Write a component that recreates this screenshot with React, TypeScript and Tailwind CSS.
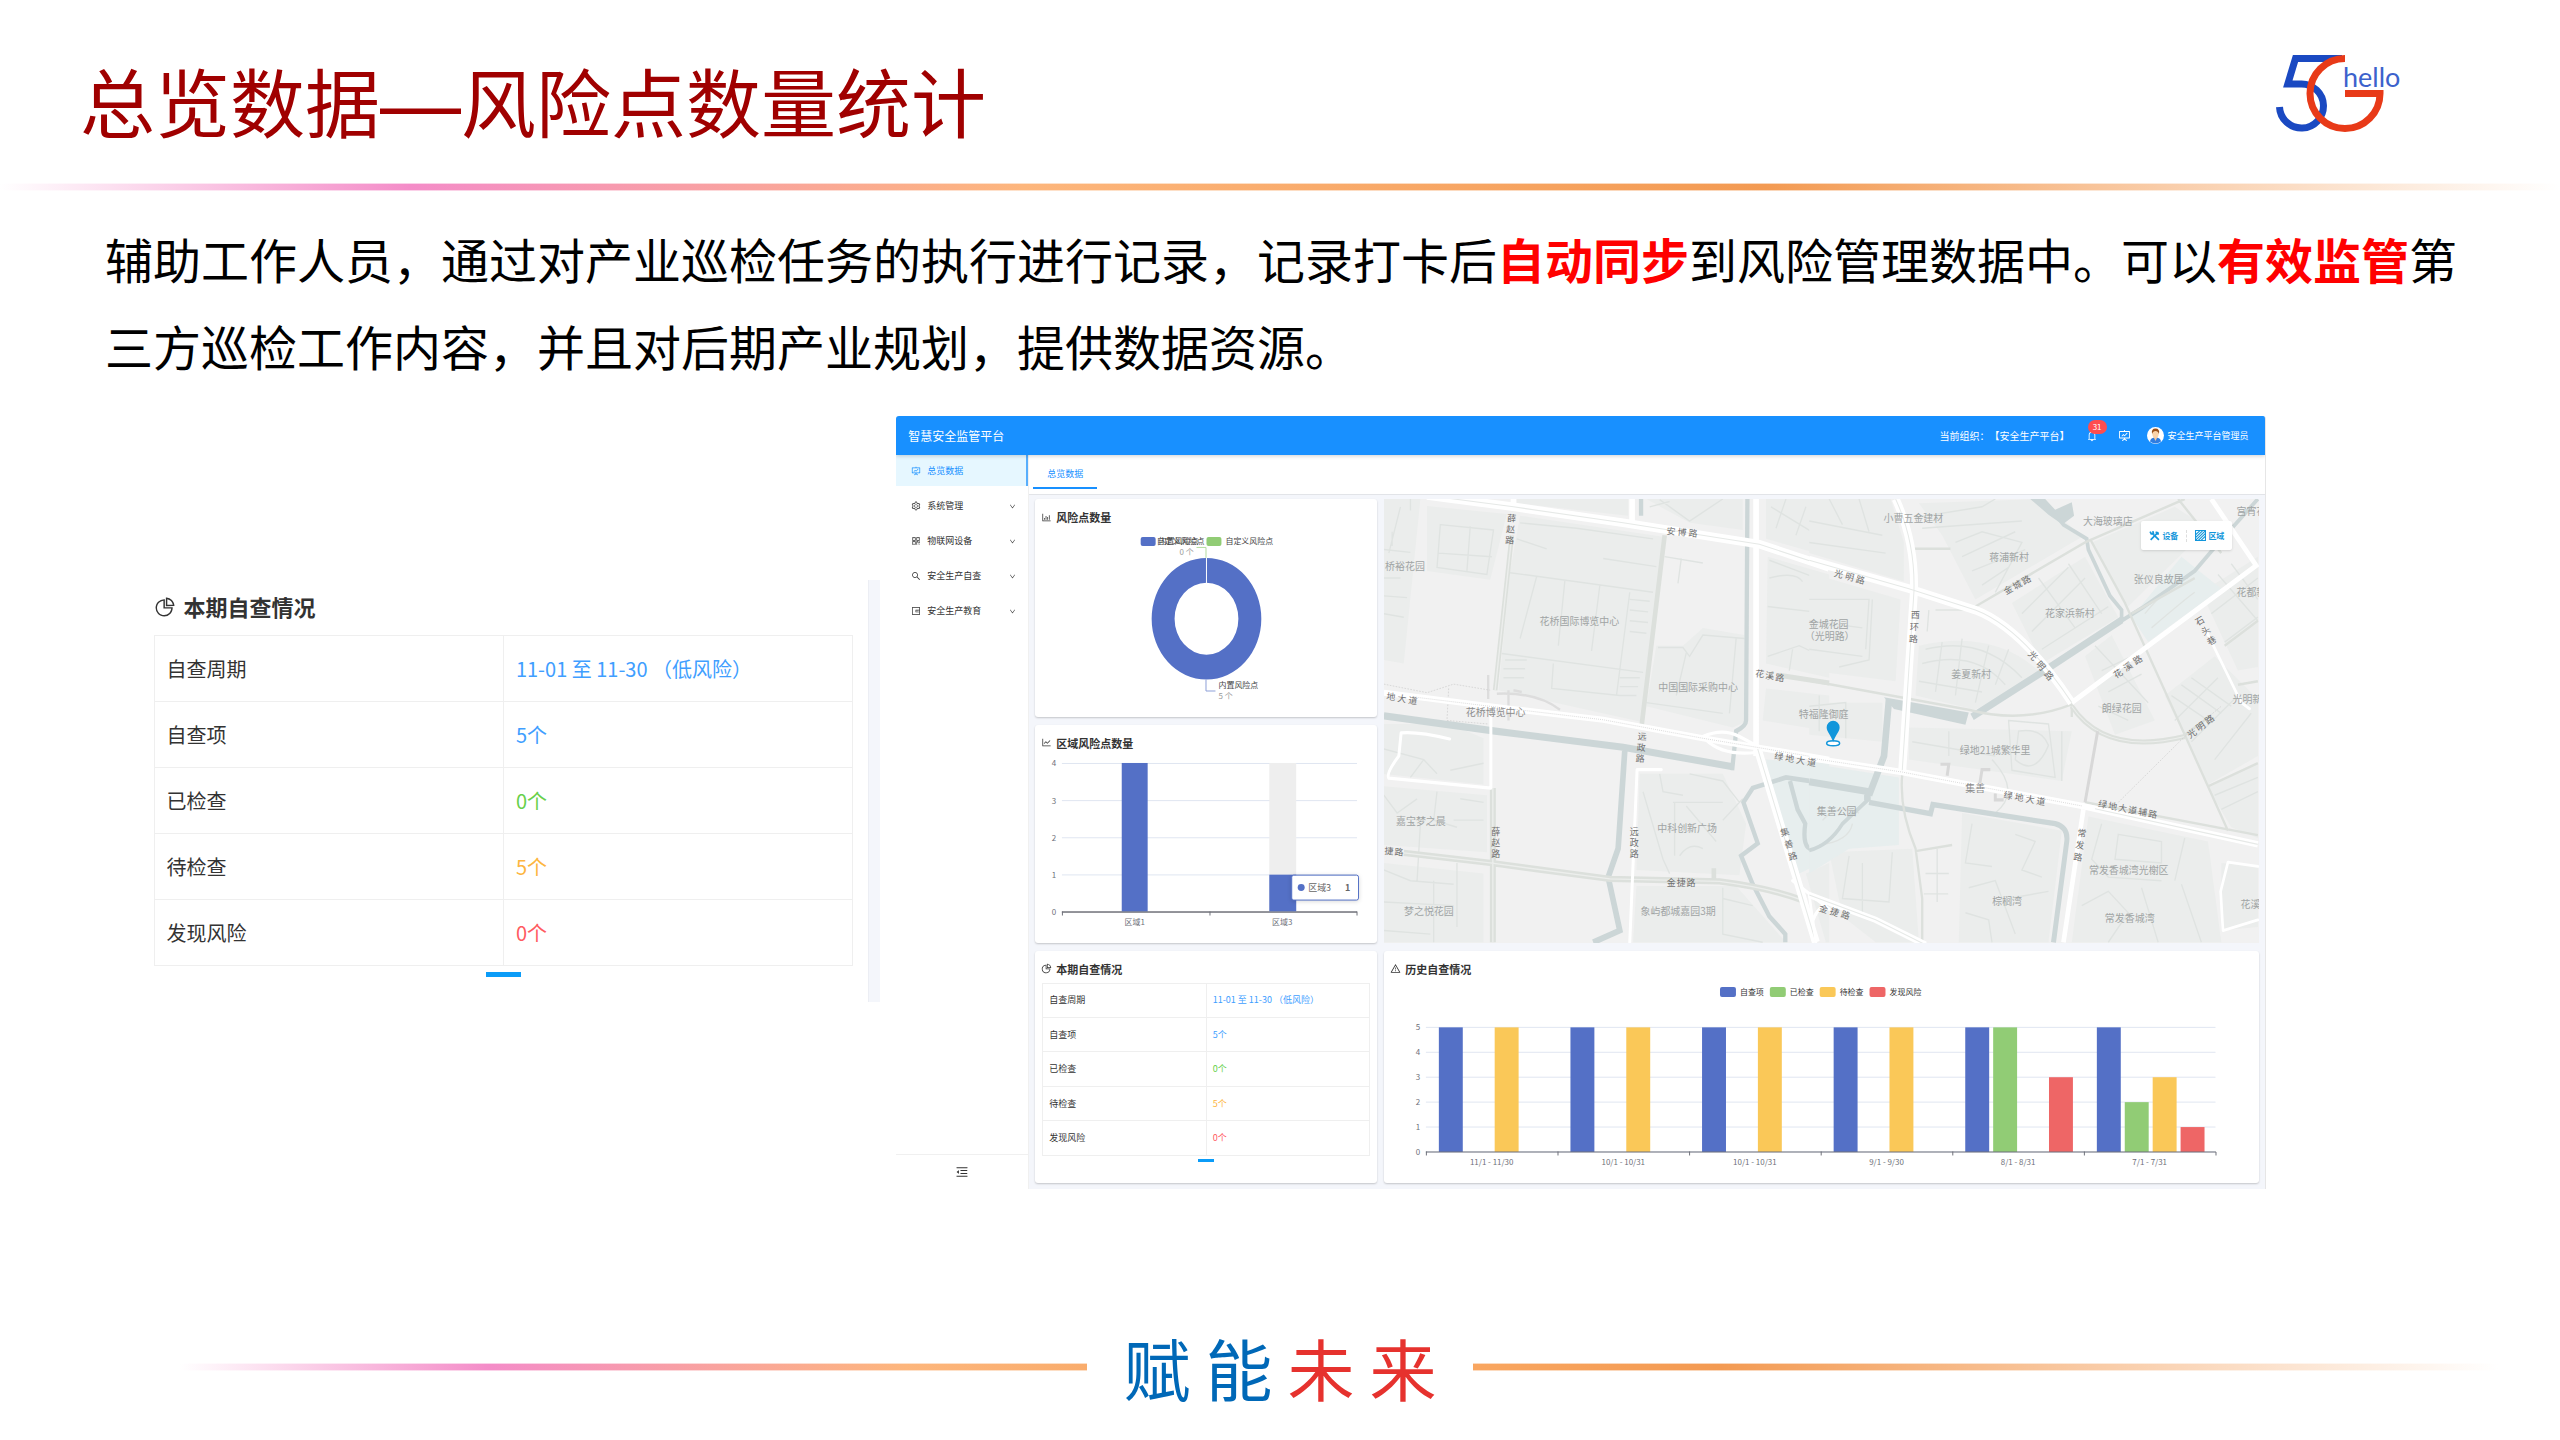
import React from 'react'
import {
  AiOutlineBarChart,
  AiOutlineBell,
  AiOutlineDown,
  AiOutlineFundProjectionScreen,
  AiOutlineLineChart,
  AiOutlineMenuFold,
  AiOutlinePieChart,
  AiOutlineQrcode,
  AiOutlineSearch,
  AiOutlineSetting,
  AiOutlineWallet,
  AiOutlineWarning,
} from 'react-icons/ai'

const checkRows = [
  { label: '自查周期', value: '11-01 至 11-30 （低风险）', color: 'text-[#409eff]' },
  { label: '自查项', value: '5个', color: 'text-[#409eff]' },
  { label: '已检查', value: '0个', color: 'text-[#67d04a]' },
  { label: '待检查', value: '5个', color: 'text-[#fdb540]' },
  { label: '发现风险', value: '0个', color: 'text-[#ff5a5f]' },
]

const menu = [
  { label: '系统管理', Icon: AiOutlineSetting },
  { label: '物联网设备', Icon: AiOutlineQrcode },
  { label: '安全生产自查', Icon: AiOutlineSearch },
  { label: '安全生产教育', Icon: AiOutlineWallet },
]

const series = [
  { name: '自查项', color: '#5470c6', x: 337 },
  { name: '已检查', color: '#91cc75', x: 387 },
  { name: '待检查', color: '#fac858', x: 437 },
  { name: '发现风险', color: '#ee6666', x: 487 },
]

const history = [
  { label: '11/1 - 11/30', values: [5, 0, 5, 0] },
  { label: '10/1 - 10/31', values: [5, 0, 5, 0] },
  { label: '10/1 - 10/31', values: [5, 0, 5, 0] },
  { label: '9/1 - 9/30', values: [5, 0, 5, 0] },
  { label: '8/1 - 8/31', values: [5, 5, 0, 3] },
  { label: '7/1 - 7/31', values: [5, 2, 3, 1] },
]

// [text, x, y] centre of the label
const places: [string, number, number][] = [
  ['桥裕花园', 21, 67],
  ['花桥国际博览中心', 196, 122],
  ['中国国际采购中心', 315, 188],
  ['嘉宝梦之晨', 37, 322],
  ['梦之悦花园', 45, 413],
  ['中科创新广场', 304, 329],
  ['象屿都城嘉园3期', 295, 413],
  ['金城花园', 446, 125],
  ['（光明路）', 447, 137],
  ['特福隆御庭', 441, 215],
  ['小曹五金建材', 531, 19],
  ['蒋浦新村', 627, 58],
  ['大海玻璃店', 726, 22],
  ['张仪良故居', 777, 80],
  ['花家浜新村', 688, 114],
  ['姜夏新村', 589, 175],
  ['朗绿花园', 740, 209],
  ['绿地21城繁华里', 613, 251],
  ['集善公园', 454, 312],
  ['常发香城湾光榭区', 747, 372],
  ['常发香城湾', 748, 420],
  ['棕榈湾', 625, 403],
  ['花溪公馆', 879, 406],
  ['宫宵花园', 875, 12],
  ['花都新村', 875, 93],
  ['光明新村', 871, 200],
]

// [text, x, y, step x, step y, rotation], one glyph per step along the road
const roads: [string, number, number, number, number, number][] = [
  ['薛赵路', 128, 19, -1, 11, 3],
  ['安博路', 288, 32, 11, 1, 6],
  ['地大道', 7, 198, 11, 2, 8],
  ['远政路', 259, 238, -1, 11, 3],
  ['花溪路', 377, 175, 10, 2, 6],
  ['绿地大道', 396, 258, 11, 2, 8],
  ['薛赵路', 112, 334, 0, 11, 0],
  ['远政路', 251, 334, 0, 11, 0],
  ['捷路', 5, 353, 10, 1, 4],
  ['金捷路', 288, 385, 10, 0, 0],
  ['集善路', 402, 334, 4, 12, -15],
  ['金捷路', 441, 411, 11, 3, 18],
  ['光明路', 456, 75, 11, 3, 14],
  ['西环路', 533, 116, -1, 12, 2],
  ['金城路', 626, 91, 9, -5, -30],
  ['光明路', 651, 157, 8, 10, 48],
  ['花溪路', 736, 175, 10, -7, -33],
  ['石头巷', 818, 122, 6, 10, -30],
  ['光明路', 810, 235, 9, -7, -35],
  ['绿地大道', 626, 297, 11, 2, 8],
  ['绿地大道辅路', 721, 306, 10, 2, 9],
  ['常发路', 700, 335, -2, 12, 8],
]

const Logo = () => (
  <svg viewBox="0 0 126 78" className="h-[78px] w-[126px] overflow-visible" fill="none" strokeWidth="7" role="img" aria-label="5G hello">
    <path d="M66 3.5H19.5L11.8 29H25A22 22 0 1 1 3.5 52" stroke="#1a49c2" />
    <path d="M69 3.5A35 35 0 1 0 104 38.5H69" stroke="#e83a18" />
    <text x="67" y="32" fill="#3c62cc" fontSize="27" className="font-['Lato',sans-serif]">hello</text>
  </svg>
)

const CheckTable = ({ large }: { large?: boolean }) => (
  <>
    <table className={large ? 'w-full table-fixed border-collapse text-xl text-[#333]' : 'h-[173px] w-full table-fixed border-collapse text-[9px] leading-3 text-[#333]'}>
      <tbody>
        {checkRows.map((row) => (
          <tr key={row.label} className={large ? 'h-[66px]' : ''}>
            <th scope="row" className={`border border-[#efefef] text-left font-normal ${large ? 'px-3' : 'px-1.5'}`}>{row.label}</th>
            <td className={`border border-[#efefef] ${row.color} ${large ? 'px-3' : 'px-1.5'}`}>{row.value}</td>
          </tr>
        ))}
      </tbody>
    </table>
    <div className={large ? 'mx-auto mt-1.5 h-[5px] w-[35px] bg-[#0b9cf8]' : 'mx-auto mt-[3px] h-[3px] w-4 bg-[#0b9cf8]'}></div>
  </>
)

const Card = ({ title, icon, children }: { title: string; icon: React.ReactNode; children: React.ReactNode }) => (
  <section className="rounded-[3px] bg-white shadow-[0_1px_2px_rgba(0,0,0,0.2)]">
    <h3 className="flex h-8 items-center gap-1 px-1.5 pt-1 text-[11px] leading-4 font-bold text-[#333]">
      {icon}
      {title}
    </h3>
    {children}
  </section>
)

const RiskPie = () => (
  <svg viewBox="0 0 343 186" className="block w-full overflow-visible" fontSize="8" dominantBaseline="central">
    <rect x="106" y="6" width="15" height="9" rx="2" fill="#5470c6" />
    <text x="122" y="10" fill="#444">自定义风险点</text>
    <text x="124" y="10" fill="#444">内置风险点</text>
    <rect x="172" y="6" width="15" height="9" rx="2" fill="#91cc75" />
    <text x="191" y="10" fill="#444">自定义风险点</text>
    <text x="145" y="21" fill="#999">0 个</text>
    <path d="M162 16.5H171.5V27" fill="none" stroke="#b4dca0" />
    <path fillRule="evenodd" fill="#5470c6" d="M117 88a55 61 0 1 0 110 0a55 61 0 1 0-110 0zM140 88a32 36 0 1 1 64 0a32 36 0 1 1-64 0z" />
    <path d="M172 27V53" stroke="#fff" />
    <path d="M171.5 149V160.5H181" fill="none" stroke="#8da0d8" />
    <text x="184" y="154" fill="#444">内置风险点</text>
    <text x="184" y="165" fill="#999">5 个</text>
  </svg>
)

const AreaBars = () => (
  <svg viewBox="0 0 343 186" className="block w-full overflow-visible" fontSize="8" dominantBaseline="central" fill="#6e7079">
    {[4, 3, 2, 1, 0].map((n, i) => (
      <g key={n}>
        <text x="19" y={6 + i * 37.25} textAnchor="middle">{n}</text>
        <path d={`M27 ${6.5 + i * 37.25}H323`} stroke={n ? '#e0e6f1' : '#6e7079'} />
      </g>
    ))}
    <rect x="235" y="6" width="27" height="149" fill="#eee" />
    <rect x="87" y="6" width="26" height="149" fill="#5470c6" />
    <rect x="235" y="118" width="27" height="37" fill="#5470c6" />
    <path d="M27 155.5H323M27.5 155V159M175.5 155V159M323 155V159" stroke="#6e7079" fill="none" />
    <text x="100" y="165" textAnchor="middle">区域1</text>
    <text x="248" y="165" textAnchor="middle">区域3</text>
    <rect x="257.5" y="118.5" width="67" height="25" rx="2" fill="#fff" stroke="#5470c6" className="drop-shadow-sm" />
    <circle cx="267" cy="131" r="3.5" fill="#5470c6" />
    <text x="274" y="131" fontSize="9" fill="#666">区域3</text>
    <text x="311" y="131" fontSize="9" fontWeight="700" fill="#666">1</text>
  </svg>
)

const HistoryBars = () => (
  <svg viewBox="0 0 877 201" className="block w-full overflow-visible" fontSize="8" dominantBaseline="central" fill="#6e7079">
    {series.map((s) => (
      <g key={s.name}>
        <rect x={s.x} y="4" width="16" height="10" rx="2" fill={s.color} />
        <text x={s.x + 20} y="9" fill="#333">{s.name}</text>
      </g>
    ))}
    {[5, 4, 3, 2, 1, 0].map((n, i) => (
      <g key={n}>
        <text x="34" y={44 + i * 25} textAnchor="middle">{n}</text>
        <path d={`M42 ${44.5 + i * 25}H834`} stroke="#e0e6f1" />
      </g>
    ))}
    {history.map((h, i) => (
      <g key={i}>
        {h.values.map((v, j) => v > 0 && (
          <rect key={j} x={55 + i * 132 + j * 28} y={169.5 - v * 25} width="24" height={v * 25} fill={series[j].color} />
        ))}
        <path d={`M${42.5 + i * 132} 169V173`} stroke="#6e7079" />
        <text x={108 + i * 132} y="179" textAnchor="middle">{h.label}</text>
      </g>
    ))}
    <path d="M42 169.5H834.5V173" stroke="#6e7079" fill="none" />
  </svg>
)

const CityMap = () => (
  <svg viewBox="0 0 877 445" className="block w-full bg-[#f1f1f1]" fill="none" dominantBaseline="central" role="img" aria-label="地图">
    {/* west half */}
    <g transform="matrix(.33333 0 0 .35714 -13.5 -99.3)">
      <path fill="#ebedec" d="M40 278H150L100 740L40 730ZM170 298L410 320L360 505L170 480ZM450 325L885 385L820 905L385 815L420 480ZM440 278H775V325L440 290ZM860 690H940L1000 640L1125 660V905L1090 920L830 860ZM830 278H1120V365L960 345ZM1195 440L1380 490V780L1190 740ZM1190 810L1380 830V930L1180 900ZM40 910H240L340 950V1080L40 1050ZM40 1085L350 1110V1270L40 1250ZM40 1300L340 1330V1523H40ZM810 1050H1060L1130 1190L1110 1335L800 1320ZM800 1365H1100L1250 1523H790ZM1190 278H1380V440L1190 390ZM1310 1330L1380 1300V1523H1370Z" />
      <path fill="#e7eeee" d="M1190 1010L1380 1020V1290L1290 1330L1200 1090Z" />
      <path stroke="#dfe3e1" strokeWidth="4" d="M40 420L120 428M65 370V410M120 278V310M90 300L55 430M40 500H90M40 550L110 555M40 600L100 610M210 350L370 365L350 490L200 470ZM300 355L290 480M205 430L365 440M450 345L620 360L850 390M440 390L530 418M700 445L860 468M420 485L850 540M500 495L450 670M585 505L565 690M690 520L665 705M780 540L740 830M780 560L840 565M780 590L835 595M780 620L835 625M780 650L830 655M395 712L820 765M550 740L545 810L750 830M405 730H470M400 755H465M400 780H462M750 780H810M750 805H805M750 830H800M885 440L1000 458M935 445L925 515M865 695H940L960 720L1000 660L1125 670M950 710L920 830M1100 670L1080 880M830 850L1060 880M870 280L960 340L1060 278M840 300L900 285M1200 450L1370 510M1195 580L1380 600M1200 500Q1280 480 1300 510M1195 720L1290 690L1380 730M1270 700L1260 760M40 980L160 1010L200 1050M160 1010L120 1060M240 1040L340 1020M40 1110L80 1160L140 1120M200 1100L190 1180L260 1200M250 1180H340M270 1120L340 1130M150 1190L140 1350M40 1320L120 1350L250 1360M40 1410L250 1420M40 1490L180 1500M260 1300V1480M190 1350V1523M870 1050L880 1100L940 1110M960 1050L1060 1070L1110 1130M910 1130H1060M915 1130V1280M950 1140L1040 1240M820 1100L880 1290L900 1330M1060 1180L1120 1120M1000 1260Q960 1240 930 1280M1060 1370V1500L1180 1523M1060 1400L1150 1420M1350 830V900M1205 300L1380 400M1250 278L1220 360M1310 300L1280 380" />
      <path stroke="#ccd6d7" strokeWidth="20" d="M40 887L375 930L760 975L1090 1030" />
      <path stroke="#ccd6d7" strokeWidth="13" d="M1088 1040L1100 930Q1130 915 1130 900L1134 278M814 278V325M1380 1078L1250 1060L1150 1090L1122 1130L1165 1245L1115 1280L1150 1360L1200 1450L1248 1500V1523M1262 1070L1285 1150L1308 1190Q1298 1260 1330 1262Q1360 1255 1380 1220" />
      <path stroke="#ccd6d7" strokeWidth="17" d="M765 985L745 1260L715 1340L750 1490L670 1523" />
      <path stroke="#dce0dc" strokeWidth="14" d="M425 380L375 815M885 380L815 920M1230 773L1380 795M1033 1315V1345" />
      <path stroke="#dce0dc" strokeWidth="18" d="M368 1090V1523M100 1272L360 1300L720 1345L1050 1352Q1200 1370 1300 1405" />
      <path stroke="#eceeec" strokeWidth="4" d="M368 1090V1523M100 1272L360 1300L720 1345L1050 1352Q1200 1370 1300 1405M425 380L375 815" />
      <path stroke="#ddd" strokeWidth="7" d="M380 825Q500 820 570 870M415 815V900M354 772V840M430 815L455 820" />
      <path stroke="#ccc" strokeWidth="2" strokeDasharray="5 4" d="M40 798L170 822L250 798L360 815M235 810L230 900L355 910" />
      <path stroke="#fff" strokeWidth="24" d="M170 268L430 300L760 345L1170 405L1380 470M1165 980L1340 1523" />
      <path stroke="#fff" strokeWidth="17" d="M430 278V310M787 278V350M1160 278V1000M40 822L400 865L700 898L1000 950L1160 975L1380 1010" />
      <path stroke="#fff" strokeWidth="9" strokeLinecap="round" strokeLinejoin="round" d="M1000 945Q1060 920 1110 945L1180 980M1010 955Q1060 1000 1160 990M362 880V1090L55 1062Q45 1050 85 1000L92 935Q140 930 238 952M875 1038H802L780 1523M1270 1350L1380 1430M1330 1500Q1320 1440 1380 1410" />
      <path stroke="#e6e9e7" strokeWidth="3" d="M170 268L430 300L760 345L1170 405L1380 470M1165 980L1340 1523" />
      <path stroke="#ccc" strokeWidth="2" strokeDasharray="3 3" d="M130 834L400 865L700 898L1000 950L1160 975L1380 1010" />
    </g>
    {/* east half */}
    <g transform="matrix(.33333 0 0 .35714 426.5 -99.3)">
      <path fill="#ebedec" d="M0 278H245L285 400V510L0 430ZM0 485L275 560L260 790L0 760ZM330 290L700 278L820 385L500 560L400 380ZM610 570L830 440L930 610L700 740ZM330 690Q560 640 700 770L500 870L320 830ZM300 920L790 930L760 1070L300 1010ZM850 400L1100 300L1200 360L960 580ZM0 850L220 850V960L0 940ZM460 1160L760 1210L720 1523H450ZM840 1170L1200 1240L1240 1523H790ZM830 720L910 660L1040 900L920 940ZM1070 830L1220 720L1350 840V1000L1200 1080ZM1200 1090L1350 1020V1230L1270 1200ZM60 1270L310 1260L330 1523H200L100 1450ZM1240 1300L1350 1310V1480L1240 1490ZM1180 540L1350 440V750L1290 760Z" />
      <path fill="#e7eeee" d="M0 1020L270 1060V1250L120 1260L0 1330ZM970 610L1120 440L1240 530L1020 680Z" />
      <path stroke="#dfe3e1" strokeWidth="4" d="M0 340L220 380M60 278L100 350M150 278L180 370M0 400L230 430M0 560H180L170 700M0 620L160 640M190 560L180 730L90 750M0 700L160 720M320 330L520 300L560 278M340 360L640 340M440 400L520 370L640 400L560 540M460 440L620 370M490 480L650 420M520 520L600 470M640 600L780 470M670 650L830 500M700 700L900 580M690 500L800 640M780 460L880 600M350 700Q520 660 640 780M340 740Q500 700 590 800M330 790L520 820M400 680L380 820M460 670L440 830M540 690L500 850M600 700L560 800M310 960L560 1000M600 900L720 910L740 1060L610 1040ZM630 930Q700 920 720 970Q680 1060 620 1010ZM760 930V1070M420 930V1000M860 690L1020 850M880 760L970 720M900 820L1000 770M870 860L960 900M1090 830L1200 900M1120 800L1240 880M1150 780L1270 860M1100 900L1230 780M1150 960L1290 830M1220 1010L1330 880M1220 1110L1350 1060M1240 1150L1350 1100M1230 490L1350 620M1270 460L1350 560M1210 600L1350 500M1250 680L1350 610M880 1190L850 1290L900 1340L1060 1350M930 1220L1060 1240V1300L920 1290ZM1130 1230L1100 1350M820 1420L900 1380L960 1440L900 1523M1000 1370L1050 1523M1120 1360L1180 1523M490 1190L470 1300L550 1310M480 1370L560 1350L620 1500M470 1440L540 1460L550 1523M620 1220L680 1240L640 1320L700 1340M600 1400L720 1380M560 1160Q640 1100 550 1010M120 1280L100 1400L240 1410L250 1270M160 1300V1450M350 1330H420M345 1387H418M385 1260V1410M0 860L110 850V950M30 850V930M360 590L355 650M380 590H465M1010 600Q1100 500 1140 500M1030 640Q1130 560 1160 540M40 1180Q90 1130 150 1160M30 1250Q120 1240 130 1190" />
      <path fill="#ccd6d7" d="M665 278H710L740 308L790 287L797 325L762 350L720 322ZM225 835L480 878L470 912L255 868Z" />
      <path stroke="#ccd6d7" strokeWidth="11" d="M740 320L765 350L835 390L840 420L905 550L940 590V620L1000 585L1160 480L1210 425L1350 278M180 1120L100 1190Q60 1250 0 1265" />
      <path stroke="#ccd6d7" strokeWidth="20" d="M940 618L700 765L490 890M240 840L225 1000L180 1110M0 1072L180 1100M175 1125V1100" />
      <path stroke="#ccd6d7" strokeWidth="15" d="M180 1130L365 1162L372 1136L740 1190Q780 1200 775 1240L735 1523" />
      <path stroke="#dce0dc" strokeWidth="7" d="M500 580L830 400L1130 278M845 390L950 570L1130 940L1260 1210M0 788L480 870Q640 910 790 855V890M310 418H425M280 1050Q270 1150 320 1260L340 1400V1523M320 1267L430 1250M1130 940L1210 885M1200 1085L1350 1020M970 600L1160 500M1110 278L1240 430M830 1130L1350 1222M1250 690L1350 620M1290 800L1350 790" />
      <path stroke="#dce0dc" strokeWidth="14" d="M790 860Q890 1000 1130 945" />
      <path stroke="#eceeec" strokeWidth="3" d="M790 860Q890 1000 1130 945" />
      <path stroke="#d8d8d8" strokeWidth="9" d="M868 930L830 1130M395 1023H420L415 1055M545 1038H520L512 1085M560 1105V1123H585" />
      <path stroke="#ccc" strokeWidth="2" strokeDasharray="5 4" d="M930 1130L1130 945L1240 860" />
      <path stroke="#fff" strokeWidth="24" d="M0 450L300 530L500 590Q640 640 790 850M260 278Q320 400 315 540L280 1040" />
      <path stroke="#fff" strokeWidth="18" d="M0 1005L280 1045L820 1140L1350 1248M0 1390L200 1460L350 1530" />
      <path stroke="#fff" strokeWidth="14" d="M790 850L1345 465L1210 278M825 1150L765 1523" />
      <path stroke="#fff" strokeWidth="8" strokeLinecap="round" strokeLinejoin="round" d="M1190 640L1300 850L1325 867M1350 1310L1260 1298L1238 1380L1245 1490L1350 1460M0 1390L20 1523" />
      <path stroke="#e6e9e7" strokeWidth="3" d="M0 450L300 530L500 590Q640 640 790 850M260 278Q320 400 315 540L280 1040M860 1148L1350 1248M0 1390L200 1460L350 1530" />
      <path stroke="#ccc" strokeWidth="2" strokeDasharray="3 3" d="M0 1005L280 1045L820 1140" />
    </g>
    <g fontSize="10" fill="#a0a4a4" textAnchor="middle">
      {places.map(([text, x, y]) => (
        <text key={text} x={x} y={y}>{text}</text>
      ))}
      <text x="112" y="213" fill="#8c8c8c">花桥博览中心</text>
      <text x="593" y="289" fill="#8c8c8c">集善</text>
    </g>
    <g fontSize="9" fill="#6f6f6f" textAnchor="middle">
      {roads.map(([text, x, y, dx, dy, r], i) => (
        <g key={i}>
          {text.split('').map((c, j) => (
            <text key={j} transform={`translate(${x + j * dx} ${y + j * dy}) rotate(${r})`}>{c}</text>
          ))}
        </g>
      ))}
    </g>
    <ellipse cx="450.5" cy="245" rx="6.5" ry="2.5" stroke="#1296db" strokeWidth="1.5" fill="#fff" />
    <path d="M450.5 244C448 236 444 234 444 229A6.5 6.5 0 0 1 457 229C457 234 453 236 450.5 244Z" fill="#1296db" />
  </svg>
)

const Dashboard = () => (
  <div className="flex flex-col overflow-hidden rounded-t-[3px] border-r border-[#e6e6e6]">
    <header className="relative z-10 flex h-[39px] items-center bg-[#1890ff] px-3 text-white shadow-[0_1px_4px_rgba(0,21,41,0.2)]">
      <h2 className="flex-1 text-xs">智慧安全监管平台</h2>
      <span className="text-[10px] [text-spacing-trim:space-all]">当前组织：【安全生产平台】</span>
      <button type="button" aria-label="消息" className="relative ml-4">
        <AiOutlineBell className="h-3 w-3" />
        <span className="absolute -top-[10px] left-0.5 flex h-3.5 w-[19px] items-center justify-center rounded-full bg-[#ff4d4f] text-[8px]">31</span>
      </button>
      <button type="button" aria-label="大屏" className="ml-5"><AiOutlineFundProjectionScreen className="h-[13px] w-[13px]" /></button>
      <svg viewBox="0 0 34 34" className="ml-4 h-[17px] w-[17px]">
        <circle cx="17" cy="17" r="17" fill="#fff" />
        <path d="M6 29Q7 21 17 21T28 29Q17 37 6 29Z" fill="#2f7de1" />
        <path d="M13 20H21L17 28Z" fill="#f6c79b" />
        <ellipse cx="17" cy="13" rx="6.5" ry="8.5" fill="#fbd3a8" />
        <path d="M10 14Q8 3 17 3T24 14Q22 8 17 8T10 14Z" fill="#9a4f17" />
      </svg>
      <span className="ml-1 pr-1 text-[9px]">安全生产平台管理员</span>
    </header>
    <div className="flex flex-1">
      <aside className="flex w-[133px] shrink-0 flex-col border-r border-[#f0f0f0] bg-white text-[9px] text-[#333]">
        <nav className="flex flex-1 flex-col gap-[5px]">
          <button type="button" className="flex h-[31px] items-center gap-1.5 border-r-2 border-[#58aefc] bg-[#e6f7ff] pl-[15px] text-[#1890ff]">
            <AiOutlineFundProjectionScreen className="h-2.5 w-2.5" />
            总览数据
          </button>
          {menu.map(({ label, Icon }) => (
            <button key={label} type="button" className="flex h-[30px] items-center gap-1.5 pr-3 pl-[15px]">
              <Icon className="h-2.5 w-2.5" />
              {label}
              <AiOutlineDown className="ml-auto h-[7px] w-[7px]" />
            </button>
          ))}
        </nav>
        <button type="button" aria-label="收起菜单" className="flex h-[35px] items-center justify-center border-t border-[#f0f0f0]">
          <AiOutlineMenuFold className="h-3.5 w-3.5" />
        </button>
      </aside>
      <main className="min-w-0 flex-1 bg-[#f4f6fb]">
        <div className="flex h-10 items-center border-b border-[#e2e4e8] bg-white pl-1">
          <button type="button" className="h-7 w-16 border-b-2 border-[#1890ff] text-[9px] text-[#1890ff]">总览数据</button>
        </div>
        <div className="grid grid-cols-[343fr_877fr] gap-x-[7px] gap-y-2 px-1.5 pt-1 pb-1.5">
          <Card title="风险点数量" icon={<AiOutlineBarChart className="h-[11px] w-[11px]" />}>
            <RiskPie />
          </Card>
          <div className="relative row-span-2">
            <CityMap />
            <div className="absolute top-[5%] right-[3%] flex h-[29px] items-center rounded-[2px] bg-white px-2 text-[8px] font-bold text-[#1296db] shadow-sm">
              <button type="button" className="flex items-center gap-0.5 border-r border-dashed border-[#ddd] pr-2">
                <svg viewBox="0 0 20 20" className="h-[11px] w-[11px]" fill="none" stroke="#1296db" strokeWidth="3">
                  <path d="M3 18L17 4M6 6L18 18M2 3L4 7L8 6L7 2M13 3L14 7L18 7" />
                </svg>
                设备
              </button>
              <button type="button" className="flex items-center gap-0.5 pl-2">
                <svg viewBox="0 0 20 20" className="h-[11px] w-[11px]" fill="none" stroke="#1296db" strokeWidth="2">
                  <path d="M1 1H19V19H1ZM1 9L9 1M1 14L14 1M1 19L19 1M6 19L19 6M11 19L19 11" />
                </svg>
                区域
              </button>
            </div>
          </div>
          <Card title="区域风险点数量" icon={<AiOutlineLineChart className="h-[11px] w-[11px]" />}>
            <AreaBars />
          </Card>
          <Card title="本期自查情况" icon={<AiOutlinePieChart className="h-[11px] w-[11px]" />}>
            <div className="px-[7px]">
              <CheckTable />
            </div>
          </Card>
          <Card title="历史自查情况" icon={<AiOutlineWarning className="h-[11px] w-[11px]" />}>
            <HistoryBars />
          </Card>
        </div>
      </main>
    </div>
  </div>
)

const App = () => {
  return (
    <div className="min-h-screen bg-white font-['Noto_Sans_CJK_SC',sans-serif] text-black">
      <header className="flex h-[183px] items-center justify-between pt-4 pr-[158px] pl-20">
        <h1 className="pt-2 text-[75px] leading-none text-[#a00000]">
          总览数据<span className="font-['Liberation_Sans',sans-serif] text-[81px] leading-none">—</span>风险点数量统计
        </h1>
        <div className="mb-3"><Logo /></div>
      </header>
      <div className="h-2 border-y border-white/60 bg-linear-[90deg,#ffffff_0%,#f48cc8_16%,#fdb67c_40%,#f39a52_69%,#ffffff_100%]"></div>

      <p className="mt-6 pr-[100px] pl-[105px] text-5xl leading-[87px]">
        辅助工作人员，通过对产业巡检任务的执行进行记录，记录打卡后<strong className="text-[#ff0000]">自动同步</strong>到风险管理数据中。可以<strong className="text-[#ff0000]">有效监管</strong>第三方巡检工作内容，并且对后期产业规划，提供数据资源。
      </p>

      <div className="mt-[27px] grid grid-cols-[727fr_1370fr] items-start gap-4 pr-[11.5%] pl-[6%]">
        <section className="mt-[164px] flex">
          <div className="flex-1 pb-[25px]">
            <h2 className="flex h-[55px] items-center gap-2 pb-0.5 text-[22px] font-bold text-[#333]">
              <AiOutlinePieChart className="h-[22px] w-[22px]" />
              本期自查情况
            </h2>
            <CheckTable large />
          </div>
          <div className="ml-[15px] w-3 border-l border-[#eceef4] bg-[#f4f6fb]"></div>
        </section>
        <Dashboard />
      </div>

      <footer className="mt-[138px] flex items-center pr-[62px] pl-[180px]">
        <div className="h-2 flex-[907] border-y border-white/60 bg-linear-[90deg,#ffffff_0%,#f48cc8_34%,#fdb67c_80%,#f9ac6c_100%]"></div>
        <p className="px-[36px] text-[67px] leading-[80px] whitespace-nowrap text-[#0068b7]">
          赋 能 <span className="text-[#e6322e]">未 来</span>
        </p>
        <div className="h-2 flex-[1025] border-y border-white/60 bg-linear-[90deg,#f9a660_0%,#f39a52_24%,#ffffff_100%]"></div>
      </footer>
    </div>
  )
}

export default App
